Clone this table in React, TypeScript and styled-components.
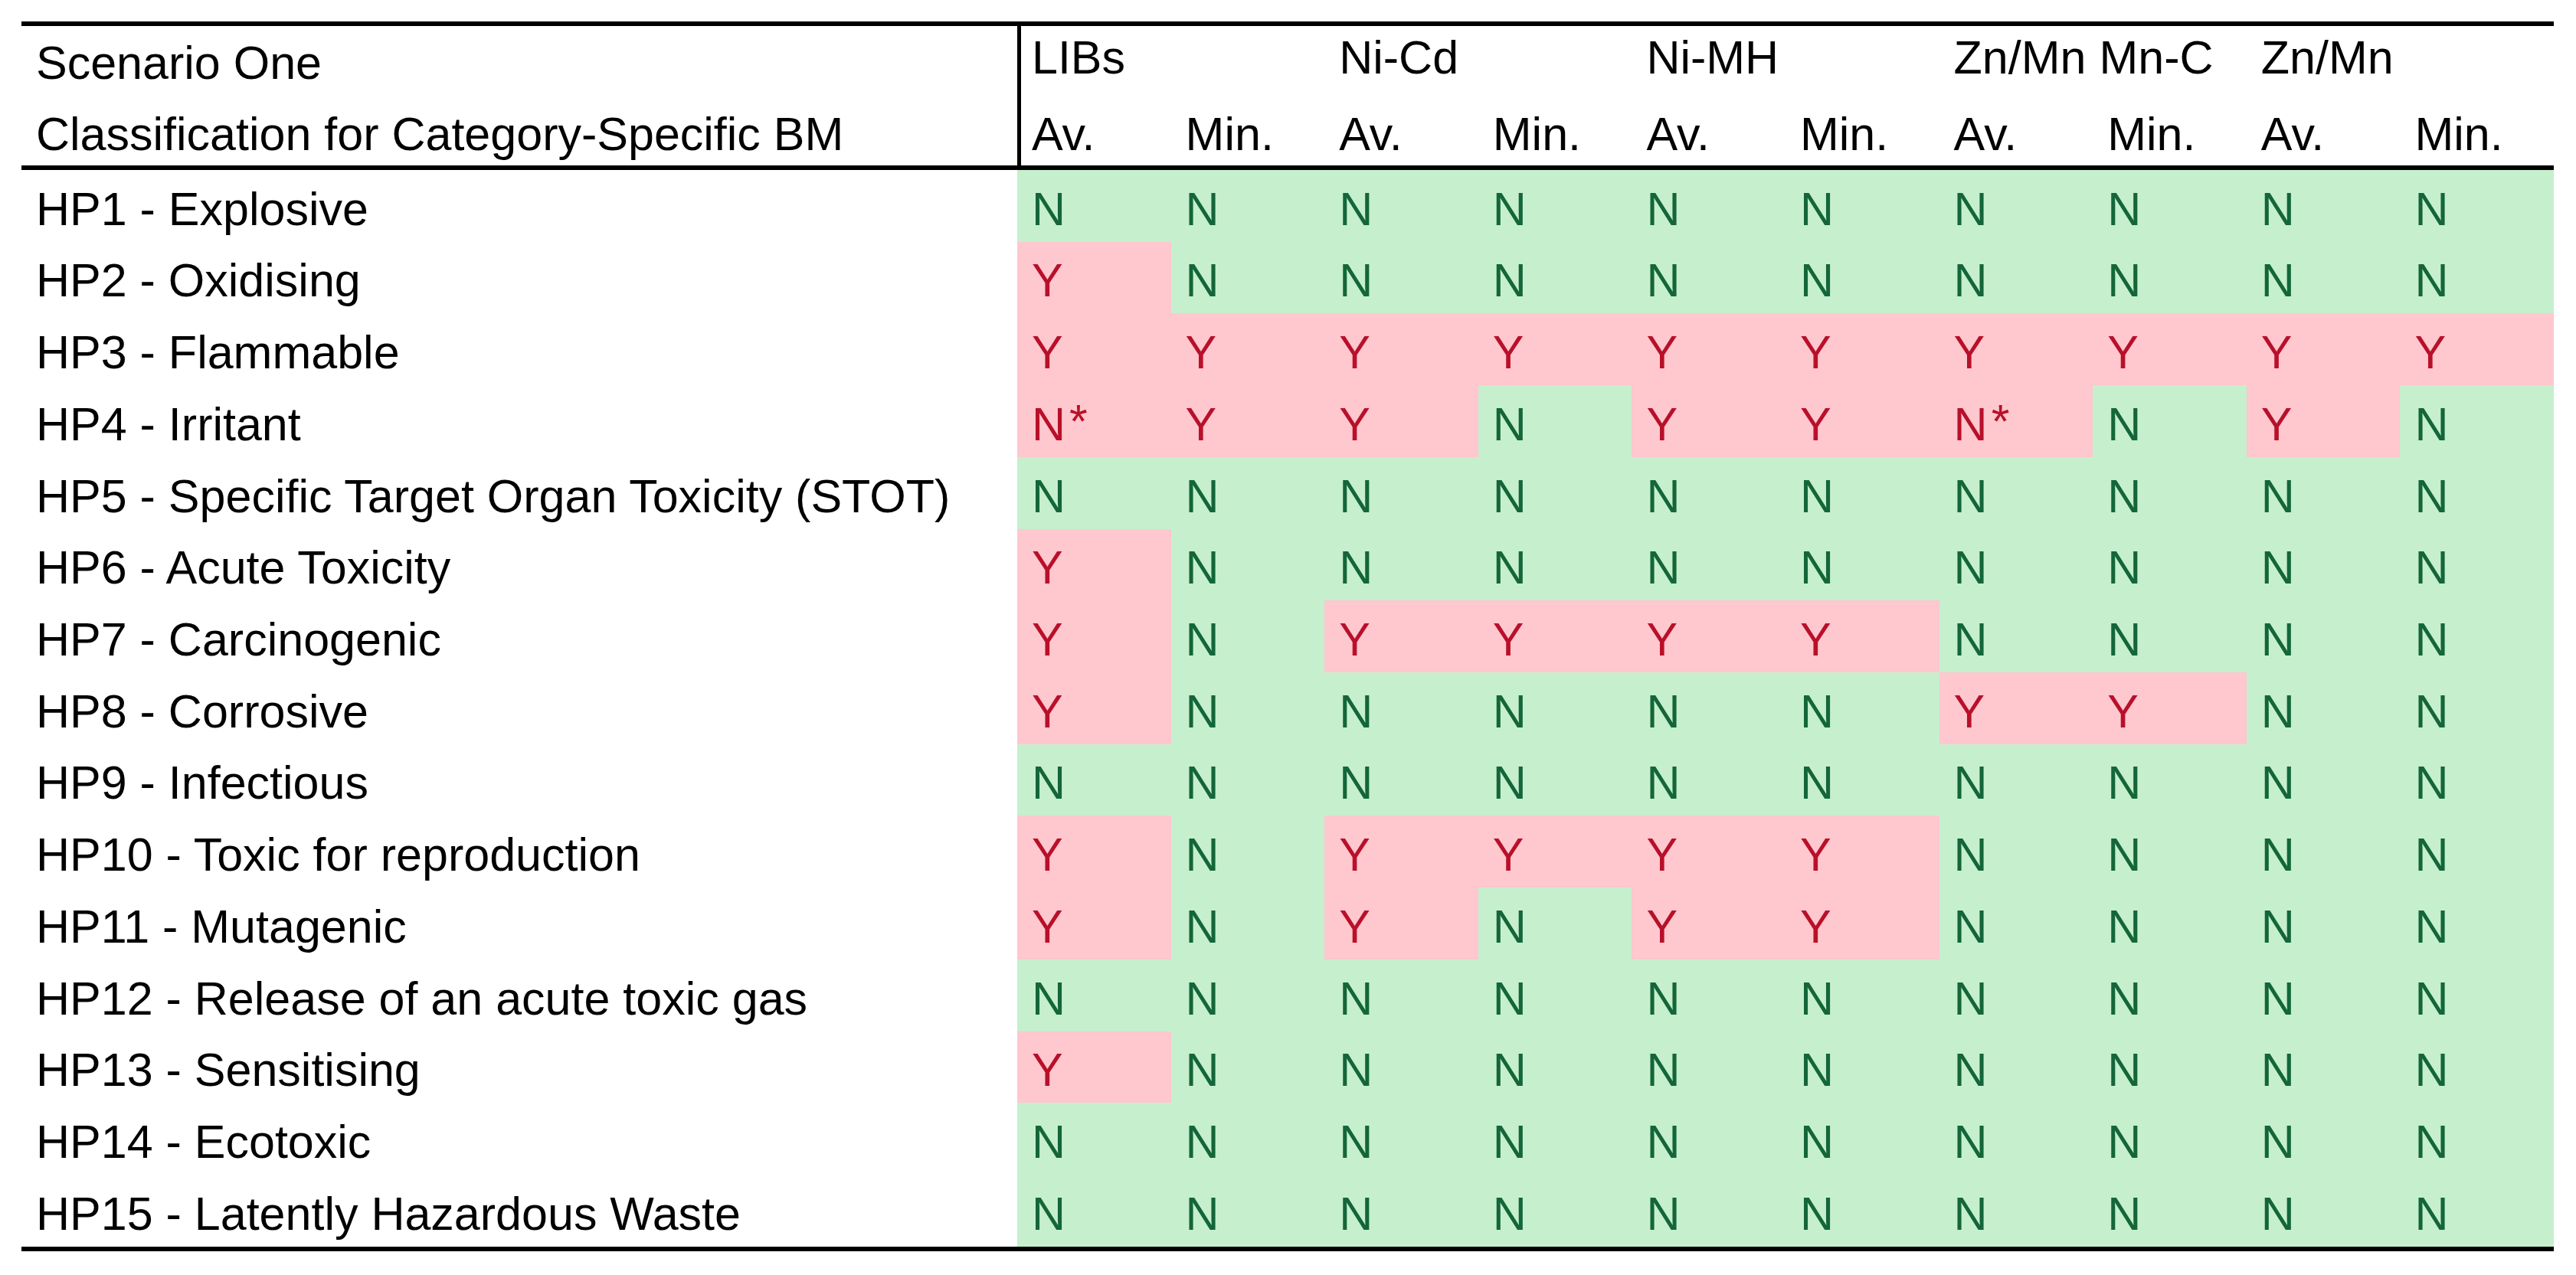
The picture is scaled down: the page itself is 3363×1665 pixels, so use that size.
import React from "react";
import styled, { createGlobalStyle } from "styled-components";

const GlobalStyle = createGlobalStyle`
  html, body {
    margin: 0;
    padding: 0;
    background: #ffffff;
  }
  body {
    font-family: "Liberation Sans", Arial, sans-serif;
  }
`;

const Page = styled.div`
  padding: 28px 29px 0 28px;
  width: 3306px;
`;

const Table = styled.div`
  width: 3306px;
  border-top: 6px solid #000;
  border-bottom: 6px solid #000;
  font-family: "Liberation Sans", Arial, sans-serif;
  font-size: 61px;
  line-height: 61px;
  color: #000;
`;

const Head = styled.div`
  border-bottom: 6px solid #000;
`;

const Row = styled.div<{ $h: number }>`
  display: grid;
  grid-template-columns: 1300px repeat(10, 1fr);
  height: ${(p) => p.$h}px;
`;

const Label = styled.div<{ $pb: number }>`
  display: flex;
  align-items: flex-end;
  padding: 0 0 ${(p) => p.$pb}px 19px;
  white-space: nowrap;
  color: #000;
`;

const GroupHead = styled.div<{ $span: number; $first?: boolean; $pb: number }>`
  grid-column: span ${(p) => p.$span};
  display: flex;
  align-items: flex-end;
  white-space: nowrap;
  overflow: visible;
  padding: 0 0 ${(p) => p.$pb}px ${(p) => (p.$first ? 14 : 19)}px;
  border-left: ${(p) => (p.$first ? "5px solid #000" : "none")};
`;

const Cell = styled.div<{ $bad: boolean }>`
  display: flex;
  align-items: flex-end;
  padding: 0 0 12px 19px;
  background: ${(p) => (p.$bad ? "#ffc7ce" : "#c6efce")};
  color: ${(p) => (p.$bad ? "#b8102a" : "#14663a")};
  white-space: nowrap;
`;

const Star = styled.span`
  margin-left: 5px;
  position: relative;
  top: -4px;
`;

const groups = ["LIBs", "Ni-Cd", "Ni-MH", "Zn/Mn Mn-C", "Zn/Mn"];

const rows: [string, string[]][] = [
  ["HP1 - Explosive", ["N", "N", "N", "N", "N", "N", "N", "N", "N", "N"]],
  ["HP2 - Oxidising", ["Y", "N", "N", "N", "N", "N", "N", "N", "N", "N"]],
  ["HP3 - Flammable", ["Y", "Y", "Y", "Y", "Y", "Y", "Y", "Y", "Y", "Y"]],
  ["HP4 - Irritant", ["N*", "Y", "Y", "N", "Y", "Y", "N*", "N", "Y", "N"]],
  ["HP5 - Specific Target Organ Toxicity (STOT)", ["N", "N", "N", "N", "N", "N", "N", "N", "N", "N"]],
  ["HP6 - Acute Toxicity", ["Y", "N", "N", "N", "N", "N", "N", "N", "N", "N"]],
  ["HP7 - Carcinogenic", ["Y", "N", "Y", "Y", "Y", "Y", "N", "N", "N", "N"]],
  ["HP8 - Corrosive", ["Y", "N", "N", "N", "N", "N", "Y", "Y", "N", "N"]],
  ["HP9 - Infectious", ["N", "N", "N", "N", "N", "N", "N", "N", "N", "N"]],
  ["HP10 - Toxic for reproduction", ["Y", "N", "Y", "Y", "Y", "Y", "N", "N", "N", "N"]],
  ["HP11 - Mutagenic", ["Y", "N", "Y", "N", "Y", "Y", "N", "N", "N", "N"]],
  ["HP12 - Release of an acute toxic gas", ["N", "N", "N", "N", "N", "N", "N", "N", "N", "N"]],
  ["HP13 - Sensitising", ["Y", "N", "N", "N", "N", "N", "N", "N", "N", "N"]],
  ["HP14 - Ecotoxic", ["N", "N", "N", "N", "N", "N", "N", "N", "N", "N"]],
  ["HP15 - Latently Hazardous Waste", ["N", "N", "N", "N", "N", "N", "N", "N", "N", "N"]],
];

const CellValue: React.FC<{ v: string }> = ({ v }) => {
  const bad = v !== "N";
  return (
    <Cell $bad={bad}>
      {v.startsWith("N") ? "N" : "Y"}
      {v.endsWith("*") && <Star>*</Star>}
    </Cell>
  );
};

export default function App() {
  return (
    <>
      <GlobalStyle />
      <Page>
        <Table>
          <Head>
            <Row $h={91}>
              <Label $pb={12}>Scenario One</Label>
              {groups.map((g, i) => (
                <GroupHead key={g + i} $span={2} $first={i === 0} $pb={19}>
                  {g}
                </GroupHead>
              ))}
            </Row>
            <Row $h={91}>
              <Label $pb={10}>Classification for Category-Specific BM</Label>
              {Array.from({ length: 10 }).map((_, i) => (
                <GroupHead key={i} $span={1} $first={i === 0} $pb={10}>
                  {i % 2 === 0 ? "Av." : "Min."}
                </GroupHead>
              ))}
            </Row>
          </Head>
          {rows.map(([label, vals]) => (
            <Row key={label} $h={93.73}>
              <Label $pb={12}>{label}</Label>
              {vals.map((v, i) => (
                <CellValue key={i} v={v} />
              ))}
            </Row>
          ))}
        </Table>
      </Page>
    </>
  );
}
